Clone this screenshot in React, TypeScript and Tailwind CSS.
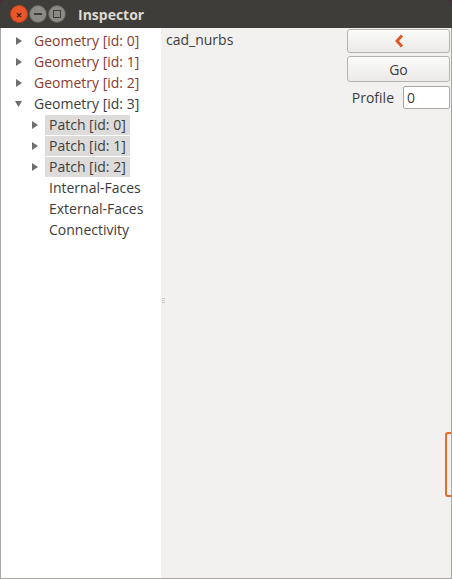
import React from "react";

const font = { fontFamily: '"Open Sans", "DejaVu Sans", sans-serif' };

const Arrow = ({ open }: { open?: boolean }) => (
  <svg width="8" height="8" viewBox="0 0 8 8" className="shrink-0">
    {open ? <polygon points="0,1 7,1 3.5,7" fill="#6f6f6f" /> : <polygon points="1,0 7,4 1,8" fill="#6f6f6f" />}
  </svg>
);

const geometries = [0, 1, 2];
const patches = [0, 1, 2];
const leaves = ["Internal-Faces", "External-Faces", "Connectivity"];

export default function App() {
  return (
    <div className="w-[452px] h-[579px] bg-[#4a2b38] text-[14px]" style={font}>
      <div className="flex flex-col h-full rounded-t-[6px] overflow-hidden">
        {/* title bar */}
        <div className="h-[28px] bg-[#3e3d39] flex items-center pl-[10px] shrink-0">
          <div className="w-[18px] h-[18px] rounded-full bg-[#e9562a] border border-[#b8401c] flex items-center justify-center text-[#3a1a10] text-[11px] font-bold leading-none">
            ×
          </div>
          <div className="ml-[1px] w-[18px] h-[18px] rounded-full bg-[#8b8a84] border border-[#5d5c57] flex items-center justify-center">
            <div className="w-[8px] h-[2px] bg-[#3e3d39]" />
          </div>
          <div className="ml-[1px] w-[18px] h-[18px] rounded-full bg-[#8b8a84] border border-[#5d5c57] flex items-center justify-center">
            <div className="w-[8px] h-[8px] border-[1.5px] border-[#3e3d39]" />
          </div>
          <span className="ml-[12px] font-bold text-[#dfdbd2] text-[14px]">Inspector</span>
        </div>

        {/* body */}
        <div className="flex flex-1 border-x border-b border-[#a8a6a0] bg-[#f2f1f0] min-h-0">
          {/* tree */}
          <div className="w-[160px] bg-white pt-[2px] text-[#3c3c3c] shrink-0">
            {geometries.map((g) => (
              <div key={g} className="h-[21px] flex items-center pl-[14px]">
                <Arrow />
                <span className="ml-[11px] text-[#8a3b32]">Geometry [id: {g}]</span>
              </div>
            ))}
            <div className="h-[21px] flex items-center pl-[14px]">
              <Arrow open />
              <span className="ml-[11px]">Geometry [id: 3]</span>
            </div>
            {patches.map((p) => (
              <div key={p} className="h-[21px] flex items-center pl-[30px]">
                <Arrow />
                <span className="ml-[6px] bg-[#dedcda] px-[4px] h-[20px] flex items-center">Patch [id: {p}]</span>
              </div>
            ))}
            {leaves.map((l) => (
              <div key={l} className="h-[21px] flex items-center pl-[48px]">
                {l}
              </div>
            ))}
          </div>

          {/* splitter + right panel */}
          <div className="relative flex-1 flex">
            <div className="absolute left-[1px] top-[270px] flex flex-col gap-[1px]">
              <div className="w-[3px] h-[1px] bg-[#c8c6c2]" />
              <div className="w-[3px] h-[1px] bg-[#c8c6c2]" />
              <div className="w-[3px] h-[1px] bg-[#c8c6c2]" />
            </div>
            <div className="flex-1 pl-[5px] pt-[1px] text-[#3c3c3c]">cad_nurbs</div>
            <div className="w-[104px] pt-[1px] pr-[1px] flex flex-col items-stretch gap-[3px]">
              <button className="h-[24px] rounded-[3px] border border-[#b5b3ae] bg-gradient-to-b from-[#fbfbfa] to-[#ebeae8] flex items-center justify-center">
                <svg width="10" height="14" viewBox="0 0 10 14">
                  <polyline points="8,1.5 3,7 8,12.5" fill="none" stroke="#e2561f" strokeWidth="2.8" />
                </svg>
              </button>
              <button className="h-[26px] rounded-[3px] border border-[#b5b3ae] bg-gradient-to-b from-[#fbfbfa] to-[#ebeae8] text-[#3c3c3c]">
                Go
              </button>
              <div className="flex items-center justify-end gap-[9px] mt-[1px]">
                <span className="text-[#3c3c3c]">Profile</span>
                <div className="w-[47px] h-[23px] bg-white border border-[#a9a7a2] rounded-[2px] flex items-center pl-[3px] text-[#3c3c3c]">
                  0
                </div>
              </div>
            </div>
            <div className="absolute right-0 top-[404px] w-[6px] h-[65px] border-2 border-r-0 border-[#ea6a2c] rounded-l-[3px]" />
          </div>
        </div>
      </div>
    </div>
  );
}
